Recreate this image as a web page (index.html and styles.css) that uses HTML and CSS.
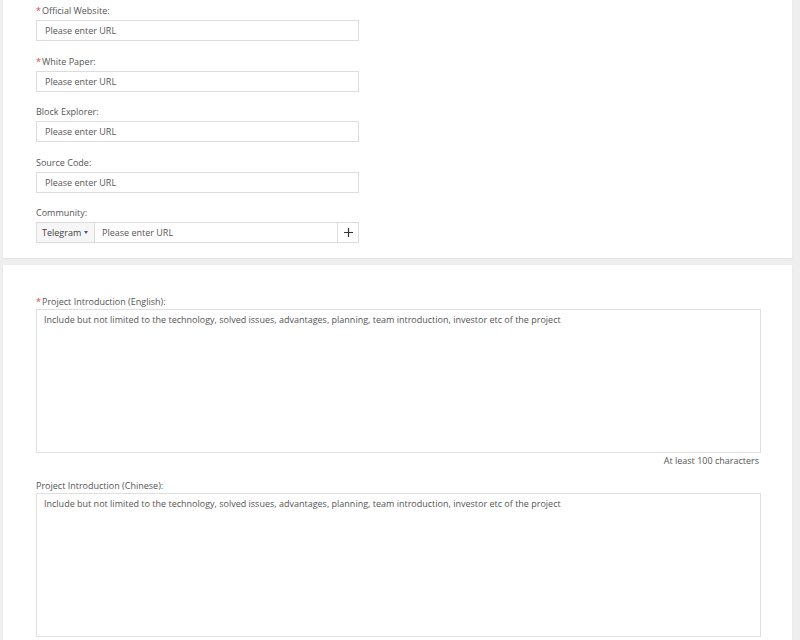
FILE: index.html
```html
<!DOCTYPE html>
<html>
<head>
<meta charset="utf-8">
<link rel="stylesheet" href="styles.css">
</head>
<body>
<div class="card card-links">
  <div class="field">
    <label class="label"><span class="req">*</span>Official Website:</label>
    <input class="input" type="text" placeholder="Please enter URL">
  </div>
  <div class="field">
    <label class="label"><span class="req">*</span>White Paper:</label>
    <input class="input" type="text" placeholder="Please enter URL">
  </div>
  <div class="field">
    <label class="label">Block Explorer:</label>
    <input class="input" type="text" placeholder="Please enter URL">
  </div>
  <div class="field">
    <label class="label">Source Code:</label>
    <input class="input" type="text" placeholder="Please enter URL">
  </div>
  <div class="field">
    <label class="label">Community:</label>
    <div class="group">
      <div class="select">Telegram<span class="caret"></span></div>
      <input class="group-input" type="text" placeholder="Please enter URL">
      <div class="add"><svg width="9" height="9" viewBox="0 0 9 9"><path d="M4.5 0v9M0 4.5h9" stroke="#333" stroke-width="1.2"/></svg></div>
    </div>
  </div>
</div>
<div class="card card-intro">
  <div class="field">
    <label class="label label-intro"><span class="req">*</span>Project Introduction (English):</label>
    <textarea class="textarea" placeholder="Include but not limited to the technology, solved issues, advantages, planning, team introduction, investor etc of the project"></textarea>
    <div class="hint">At least 100 characters</div>
  </div>
  <div class="field">
    <label class="label label-intro">Project Introduction (Chinese):</label>
    <textarea class="textarea" placeholder="Include but not limited to the technology, solved issues, advantages, planning, team introduction, investor etc of the project"></textarea>
  </div>
</div>
</body>
</html>
```
FILE: styles.css
```css
html, body {
  margin: 0;
  padding: 0;
  background: #efefef;
  font-family: "Open Sans", "Noto Sans", sans-serif;
  font-size: 9px;
  color: #555;
  overflow: hidden;
}
.card {
  background: #fff;
  margin-left: 3px;
  width: 789px;
  box-sizing: border-box;
  padding-left: 33px;
  box-shadow: 0 1px 2px rgba(0,0,0,0.06);
}
.card-links {
  padding-top: 3px;
  padding-bottom: 15px;
  display: flex;
  flex-direction: column;
  gap: 12.5px;
}
.card-intro {
  margin-top: 7px;
  padding-top: 30px;
  padding-right: 31px;
  height: 400px;
}
.field {
  display: flex;
  flex-direction: column;
}
.label {
  display: block;
  line-height: 15px;
  margin-bottom: 2px;
  color: #555;
}
.label-intro {
  line-height: 14px;
  margin-bottom: 0;
}
.req {
  color: #e0443b;
  margin-right: 1px;
}
.input, .group-input, .textarea {
  font-family: inherit;
  font-size: 9px;
  color: #555;
  outline: none;
}
.input::placeholder, .group-input::placeholder, .textarea::placeholder {
  color: #555;
  opacity: 1;
}
.input {
  width: 323px;
  height: 21px;
  box-sizing: border-box;
  border: 1px solid #dcdcdc;
  padding: 0 8px;
  margin: 0;
  background: #fff;
}
.group {
  display: flex;
  width: 323px;
  height: 21px;
  box-sizing: border-box;
  border: 1px solid #dcdcdc;
}
.select {
  width: 58px;
  box-sizing: border-box;
  background: #f6f6f6;
  border-right: 1px solid #dcdcdc;
  display: flex;
  align-items: center;
  padding-left: 5px;
  color: #444;
}
.caret {
  display: inline-block;
  width: 0;
  height: 0;
  border-left: 2.5px solid transparent;
  border-right: 2.5px solid transparent;
  border-top: 3px solid #555;
  margin-left: 3px;
}
.group-input {
  flex: 1;
  border: none;
  padding: 0 7px;
  min-width: 0;
  background: #fff;
}
.add {
  width: 20px;
  border-left: 1px solid #dcdcdc;
  display: flex;
  align-items: center;
  justify-content: center;
  background: #fff;
}
.textarea {
  width: 725px;
  height: 144px;
  box-sizing: border-box;
  border: 1px solid #e0e0e0;
  padding: 3px 7px;
  margin: 0;
  resize: none;
  line-height: 13px;
  display: block;
}
.hint {
  width: 723px;
  text-align: right;
  line-height: 13px;
  margin-top: 1px;
  margin-bottom: 12px;
  color: #555;
}
```
